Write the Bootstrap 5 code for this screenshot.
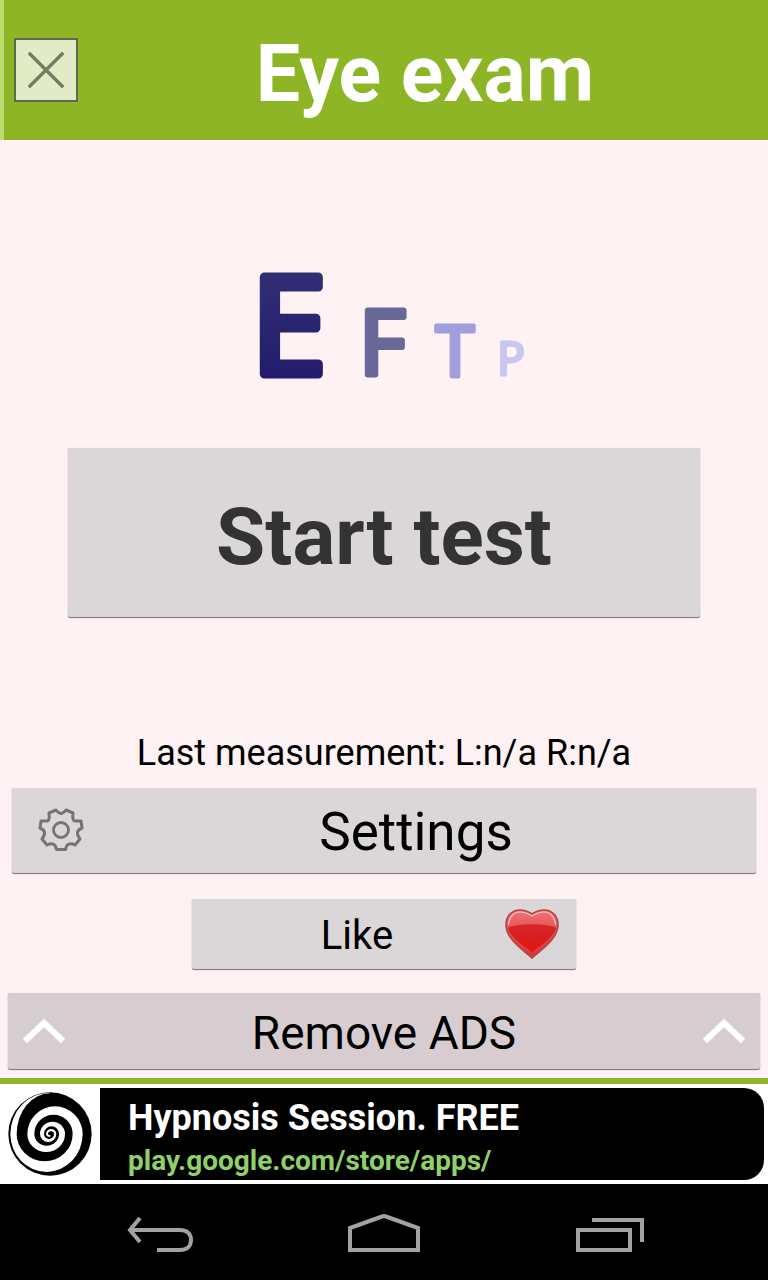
<!DOCTYPE html>
<html lang="en">
<head>
<meta charset="utf-8">
<meta name="viewport" content="width=device-width, initial-scale=1">
<title>Eye exam</title>
<link href="https://cdn.jsdelivr.net/npm/bootstrap@5.3.0/dist/css/bootstrap.min.css" rel="stylesheet">
<style>
body { font-family: Roboto, sans-serif; background: #fff2f4; color: #000; }
.topbar { background: #8db526; border-left: 4px solid #b9dc6c; height: 140px; padding-left: 10px; }
.close-btn { width: 64px; height: 64px; background: #e1ecc7; border: 2px solid #5f6a50; }
.app-title { font-size: 79px; line-height: 96px; font-weight: 700; padding-top: 8px; padding-left: 4px; }
.droid-btn { background: #dbd7d9; border: 0; border-radius: 2px; color: #000; line-height: 1; box-shadow: 0 1px 1px #756f71, 0 0 1px #cbc5c7; }
.droid-btn:hover { background: #d2cdd0; }
.start-area { padding: 84px 68px 0; }
.chart { width: 300px; height: 200px; }
.start-btn { height: 169px; margin-top: 24px; padding: 8px 0 0; font-size: 80px; font-weight: 700; color: #333; }
.last { font-size: 36px; line-height: 44px; padding-bottom: 13px; }
.settings-btn { height: 85px; margin: 0 12px; padding: 0 8px 0 26px; font-size: 53px; }
.like-btn { height: 70px; width: 50%; margin: 26px auto 0; padding: 0 16px 0 18px; font-size: 40px; }
.like-btn span, .remove-btn span, .settings-btn span { padding-top: 4px; }
.remove-btn { height: 76px; margin: 24px 8px 9px; padding: 0 14px; font-size: 46px; background: #d7cdd0; }
.advert { border-top: 6px solid #8db526; height: 106px; padding: 4px 4px 4px 0; }
.advert-icon { width: 100px; padding-left: 8px; }
.advert-text { background: #000; border-radius: 0 20px 20px 0; padding-left: 28px; font-weight: 700; }
.advert-title { font-size: 36px; line-height: 44px; color: #fff; padding-top: 8px; }
.advert-link { font-size: 28px; line-height: 42px; color: #8fd068; }
.sysbar { background: #000; height: 96px; padding: 2px 62px 0; }
.sysbar button { color: #a3a3a3; width: 196px; height: 94px; }
</style>
</head>
<body>
<div class="d-flex flex-column min-vh-100">
  <header class="topbar d-flex align-items-center">
    <button type="button" class="close-btn p-0 flex-shrink-0 d-flex align-items-center justify-content-center" aria-label="Close">
      <svg width="36" height="36" viewBox="0 0 36 36" fill="none" stroke="#737d62" stroke-width="3.4" stroke-linecap="square"><path d="M2 2 34 34M34 2 2 34"/></svg>
    </button>
    <h1 class="app-title text-white text-center flex-grow-1 m-0">Eye exam</h1>
  </header>

  <main class="d-flex flex-column flex-grow-1">
    <section class="start-area text-center d-flex flex-column align-items-center">
      <svg class="chart" viewBox="0 0 300 200" role="img" aria-label="Eye chart letters" font-family="'Open Sans', sans-serif" font-weight="400" stroke-linejoin="round">
        <defs>
          <linearGradient id="ink" x1="0" y1="0" x2="0" y2="1"><stop offset=".25" stop-color="#312e75"/><stop offset=".8" stop-color="#221c6c"/></linearGradient>
        </defs>
        <text x="17" y="150" font-size="136" fill="url(#ink)" stroke="url(#ink)" stroke-width="9">E</text>
        <text x="125" y="151" font-size="90" fill="#696999" stroke="#696999" stroke-width="6">F</text>
        <text x="202" y="152" font-size="69" fill="#a09edc" stroke="#a09edc" stroke-width="5">T</text>
        <text x="263" y="151" font-size="46" fill="#cac7ef" stroke="#cac7ef" stroke-width="3">P</text>
      </svg>
      <button type="button" class="droid-btn start-btn w-100">Start test</button>
    </section>

    <p class="last text-center mt-auto mb-0">Last measurement: L:n/a R:n/a</p>
    <button type="button" class="droid-btn settings-btn d-flex align-items-center">
      <svg width="46" height="46" viewBox="-23 -22 46 46" fill="none" stroke="#777375" stroke-width="3" stroke-linejoin="round"><circle r="7.5" stroke-width="2.8"/><path d="M-5-20Q0-13 5-20L12-17Q11-9 14-9H20L21-2Q13 1 19 9L14 15Q6 11 4.500 19.500H-4.500Q-6 11-14 15L-19 9Q-13 1-21-2L-20-9H-14Q-11-9-12-17Z"/></svg>
      <span class="flex-grow-1">Settings</span>
    </button>
    <button type="button" class="droid-btn like-btn d-flex align-items-center">
      <span class="flex-grow-1">Like</span>
      <svg width="56" height="52" viewBox="0 0 56 52" aria-hidden="true">
        <defs>
          <linearGradient id="gloss" x1="0" y1="0" x2="0" y2="1"><stop offset="0" stop-color="#ee7779"/><stop offset=".4" stop-color="#e95052"/><stop offset="1" stop-color="#d63335"/></linearGradient>
          <linearGradient id="deep" x1="0" y1="0" x2="0" y2="1"><stop offset="0" stop-color="#d1282a"/><stop offset="1" stop-color="#e11412"/></linearGradient>
        </defs>
        <path d="M28 50C22 44 2 32 2 17C2 8 8 2 16 2C21 2 25 4 28 6C31 4 35 2 40 2C48 2 54 8 54 17C54 32 34 44 28 50Z" fill="url(#gloss)" stroke="#b0474b" stroke-width="1.600"/>
        <path d="M4.500 17C5 9 10 4 16 4C21 4 25 6 28 8C31 6 35 4 40 4C46 4 51 9 51.500 17" fill="none" stroke="#f9c3c4" stroke-width="1.200"/>
        <path d="M4 20C14 15 42 15 52 20C50 30 34 39 28 44C22 39 6 30 4 20Z" fill="url(#deep)"/>
      </svg>
    </button>
    <button type="button" class="droid-btn remove-btn d-flex align-items-center justify-content-between">
      <svg width="44" height="26" viewBox="0 0 44 26" fill="none" stroke="#fff" stroke-width="6"><path d="M3 23 22 5 41 23"/></svg>
      <span>Remove ADS</span>
      <svg width="44" height="26" viewBox="0 0 44 26" fill="none" stroke="#fff" stroke-width="6"><path d="M3 23 22 5 41 23"/></svg>
    </button>
  </main>

  <aside class="advert bg-white d-flex">
    <div class="advert-icon flex-shrink-0 d-flex align-items-center">
      <svg width="84" height="84" viewBox="-126 -126 252 252" aria-hidden="true">
        <circle r="125"/>
        <path fill="#fff" d="M0-124A119 124 0 0 0-119 0A108.500 114 0 0 0 98 0A83 83 0 0 0-68 0A56.500 54 0 0 0 45 0A37.500 37 0 0 0-30 0A24.500 24 0 0 0 19 0A15.500 15 0 0 0-12 0Q-11 9 0 9L2 4Q-6 4-6 0A9 8 0 0 1 12 0A15 15 0 0 1-18 0A22.500 23 0 0 1 27 0A37 35 0 0 1-47 0A57.500 58 0 0 1 68 0A84 82 0 0 1-100 0A100 122 0 0 1 0-122Z"/>
      </svg>
    </div>
    <div class="advert-text flex-grow-1">
      <div class="advert-title">Hypnosis Session. FREE</div>
      <a href="#" class="advert-link d-block text-decoration-none">play.google.com/store/apps/</a>
    </div>
  </aside>

  <nav class="sysbar d-flex justify-content-between" aria-label="System">
    <button type="button" class="btn border-0 p-0" aria-label="Back">
      <svg width="68" height="40" viewBox="0 0 68 40" fill="none" stroke="currentColor" stroke-width="4"><path d="M4 17H54C62 17 65 22 65 27S62 37 54 37H31M14 5 4 17 14 29"/></svg>
    </button>
    <button type="button" class="btn border-0 p-0" aria-label="Home">
      <svg width="72" height="40" viewBox="0 0 72 40" fill="none" stroke="currentColor" stroke-width="4"><path d="M2 37V15L34 3.500 36 3 38 3.500 70 15V37Z"/></svg>
    </button>
    <button type="button" class="btn border-0 p-0" aria-label="Recent apps">
      <svg width="72" height="40" viewBox="0 0 72 40" fill="none" stroke="currentColor" stroke-width="4"><path d="M6 17H58V37H6ZM20 7H70V29"/></svg>
    </button>
  </nav>
</div>
<script src="https://cdn.jsdelivr.net/npm/bootstrap@5.3.0/dist/js/bootstrap.bundle.min.js"></script>
</body>
</html>
